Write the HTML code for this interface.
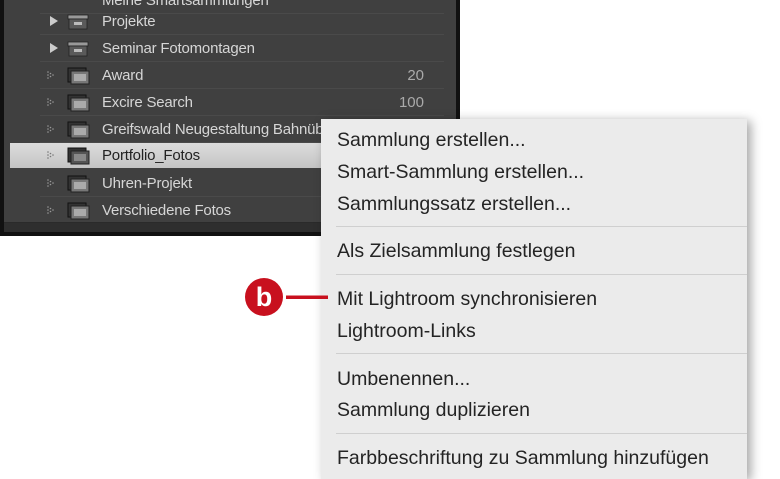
<!DOCTYPE html>
<html><head><meta charset="utf-8"><style>
*{margin:0;padding:0;box-sizing:border-box}
body{width:780px;height:470px;background:#fff;position:relative;overflow:hidden;font-family:"Liberation Sans",sans-serif}
#panel{position:absolute;left:0;top:-4px;width:460px;height:240px;background:#111;}
#inner{position:absolute;left:4px;top:0;width:452px;height:236px;background:#404040;}
#strip{position:absolute;left:0;bottom:0;width:100%;height:10px;background:#2e2e2e;border-top:1px solid #2a2a2a}
.row{position:absolute;left:0;width:452px;height:27px;color:#d6d6d6;font-size:15px;line-height:27px}
.row .sep{position:absolute;left:36px;right:12px;bottom:0;height:1px;background:#4a4a4a}
.row .t{position:absolute;left:98px;top:0;letter-spacing:-0.2px}
.row .n{position:absolute;right:32px;top:0;color:#aaa}
.sel{background:linear-gradient(#dcdcdc,#c4c4c4);color:#222;left:6px;width:330px}
.ico{position:absolute;left:36px;top:0}
#menu{position:absolute;left:321px;top:119px;width:426px;height:360px;background:#ebebeb;box-shadow:4px 2px 10px rgba(0,0,0,.35)}
.mi{position:absolute;left:16px;font-size:19.5px;color:#242424;line-height:22px}
.ms{position:absolute;left:15px;right:0;height:1px;background:#cfcfcf}
</style></head><body>
<div id="panel"><div id="inner">
<div class="row" style="top:-9px"><span class="t">Meine Smartsammlungen</span><div class="sep"></div></div>
<div class="row" style="top:12px"><svg class="ico" width="60" height="27"><polygon points="10,8 10,18 18,13" fill="#ccc"/><rect x="28" y="7" width="20" height="4" fill="#999" stroke="#222" stroke-width=".8"/><rect x="29" y="11" width="18" height="10" fill="#5a5a5a" stroke="#222" stroke-width=".8"/><rect x="34" y="14" width="8" height="3" fill="#bbb"/></svg><span class="t">Projekte</span><div class="sep"></div></div>
<div class="row" style="top:39px"><svg class="ico" width="60" height="27"><polygon points="10,8 10,18 18,13" fill="#ccc"/><rect x="28" y="7" width="20" height="4" fill="#999" stroke="#222" stroke-width=".8"/><rect x="29" y="11" width="18" height="10" fill="#5a5a5a" stroke="#222" stroke-width=".8"/><rect x="34" y="14" width="8" height="3" fill="#bbb"/></svg><span class="t">Seminar Fotomontagen</span><div class="sep"></div></div>
<div class="row" style="top:66px"><svg class="ico" width="60" height="27"><g fill="#999"><circle cx="8" cy="10" r=".8"/><circle cx="8" cy="13" r=".8"/><circle cx="8" cy="16" r=".8"/><circle cx="10.5" cy="11.5" r=".8"/><circle cx="10.5" cy="14.5" r=".8"/><circle cx="13" cy="13" r=".8"/></g><rect x="28" y="6" width="18" height="14" fill="#333" stroke="#111"/><rect x="31" y="9" width="18" height="13" fill="#777" stroke="#222"/><rect x="34" y="12" width="12" height="7" fill="#aaa"/></svg><span class="t">Award</span><span class="n">20</span><div class="sep"></div></div>
<div class="row" style="top:93px"><svg class="ico" width="60" height="27"><g fill="#999"><circle cx="8" cy="10" r=".8"/><circle cx="8" cy="13" r=".8"/><circle cx="8" cy="16" r=".8"/><circle cx="10.5" cy="11.5" r=".8"/><circle cx="10.5" cy="14.5" r=".8"/><circle cx="13" cy="13" r=".8"/></g><rect x="28" y="6" width="18" height="14" fill="#333" stroke="#111"/><rect x="31" y="9" width="18" height="13" fill="#777" stroke="#222"/><rect x="34" y="12" width="12" height="7" fill="#aaa"/></svg><span class="t">Excire Search</span><span class="n">100</span><div class="sep"></div></div>
<div class="row" style="top:120px"><svg class="ico" width="60" height="27"><g fill="#999"><circle cx="8" cy="10" r=".8"/><circle cx="8" cy="13" r=".8"/><circle cx="8" cy="16" r=".8"/><circle cx="10.5" cy="11.5" r=".8"/><circle cx="10.5" cy="14.5" r=".8"/><circle cx="13" cy="13" r=".8"/></g><rect x="28" y="6" width="18" height="14" fill="#333" stroke="#111"/><rect x="31" y="9" width="18" height="13" fill="#777" stroke="#222"/><rect x="34" y="12" width="12" height="7" fill="#aaa"/></svg><span class="t">Greifswald Neugestaltung Bahnübergang</span><div class="sep"></div></div>
<div class="row sel" style="top:147px;height:25px;line-height:25px"><svg class="ico" style="left:30px" width="60" height="25"><g fill="#777"><circle cx="8" cy="9" r=".8"/><circle cx="8" cy="12" r=".8"/><circle cx="8" cy="15" r=".8"/><circle cx="10.5" cy="10.5" r=".8"/><circle cx="10.5" cy="13.5" r=".8"/><circle cx="13" cy="12" r=".8"/></g><rect x="28" y="5" width="18" height="14" fill="#333" stroke="#111"/><rect x="31" y="8" width="18" height="13" fill="#555" stroke="#222"/><rect x="34" y="11" width="12" height="7" fill="#888"/></svg><span class="t" style="left:92px">Portfolio_Fotos</span></div>
<div class="row" style="top:174px"><svg class="ico" width="60" height="27"><g fill="#999"><circle cx="8" cy="10" r=".8"/><circle cx="8" cy="13" r=".8"/><circle cx="8" cy="16" r=".8"/><circle cx="10.5" cy="11.5" r=".8"/><circle cx="10.5" cy="14.5" r=".8"/><circle cx="13" cy="13" r=".8"/></g><rect x="28" y="6" width="18" height="14" fill="#333" stroke="#111"/><rect x="31" y="9" width="18" height="13" fill="#777" stroke="#222"/><rect x="34" y="12" width="12" height="7" fill="#aaa"/></svg><span class="t">Uhren-Projekt</span><div class="sep"></div></div>
<div class="row" style="top:201px"><svg class="ico" width="60" height="27"><g fill="#999"><circle cx="8" cy="10" r=".8"/><circle cx="8" cy="13" r=".8"/><circle cx="8" cy="16" r=".8"/><circle cx="10.5" cy="11.5" r=".8"/><circle cx="10.5" cy="14.5" r=".8"/><circle cx="13" cy="13" r=".8"/></g><rect x="28" y="6" width="18" height="14" fill="#333" stroke="#111"/><rect x="31" y="9" width="18" height="13" fill="#777" stroke="#222"/><rect x="34" y="12" width="12" height="7" fill="#aaa"/></svg><span class="t">Verschiedene Fotos</span></div>
<div id="strip"></div>
</div></div>

<div id="menu">
<div class="mi" style="top:10px">Sammlung erstellen...</div>
<div class="mi" style="top:42px">Smart-Sammlung erstellen...</div>
<div class="mi" style="top:74px">Sammlungssatz erstellen...</div>
<div class="ms" style="top:107px"></div>
<div class="mi" style="top:121px">Als Zielsammlung festlegen</div>
<div class="ms" style="top:155px"></div>
<div class="mi" style="top:169px">Mit Lightroom synchronisieren</div>
<div class="mi" style="top:201px">Lightroom-Links</div>
<div class="ms" style="top:234px"></div>
<div class="mi" style="top:249px">Umbenennen...</div>
<div class="mi" style="top:280px">Sammlung duplizieren</div>
<div class="ms" style="top:314px"></div>
<div class="mi" style="top:328px">Farbbeschriftung zu Sammlung hinzufügen</div>
</div>

<svg style="position:absolute;left:240px;top:275px" width="90" height="45">
<circle cx="24" cy="22" r="19" fill="#c8101e"/>
<text x="24" y="31" font-family="Liberation Sans" font-weight="bold" font-size="27" fill="#fff" text-anchor="middle">b</text>
<rect x="46" y="20.5" width="42" height="3.5" fill="#c8101e"/>
</svg>
</body></html>
